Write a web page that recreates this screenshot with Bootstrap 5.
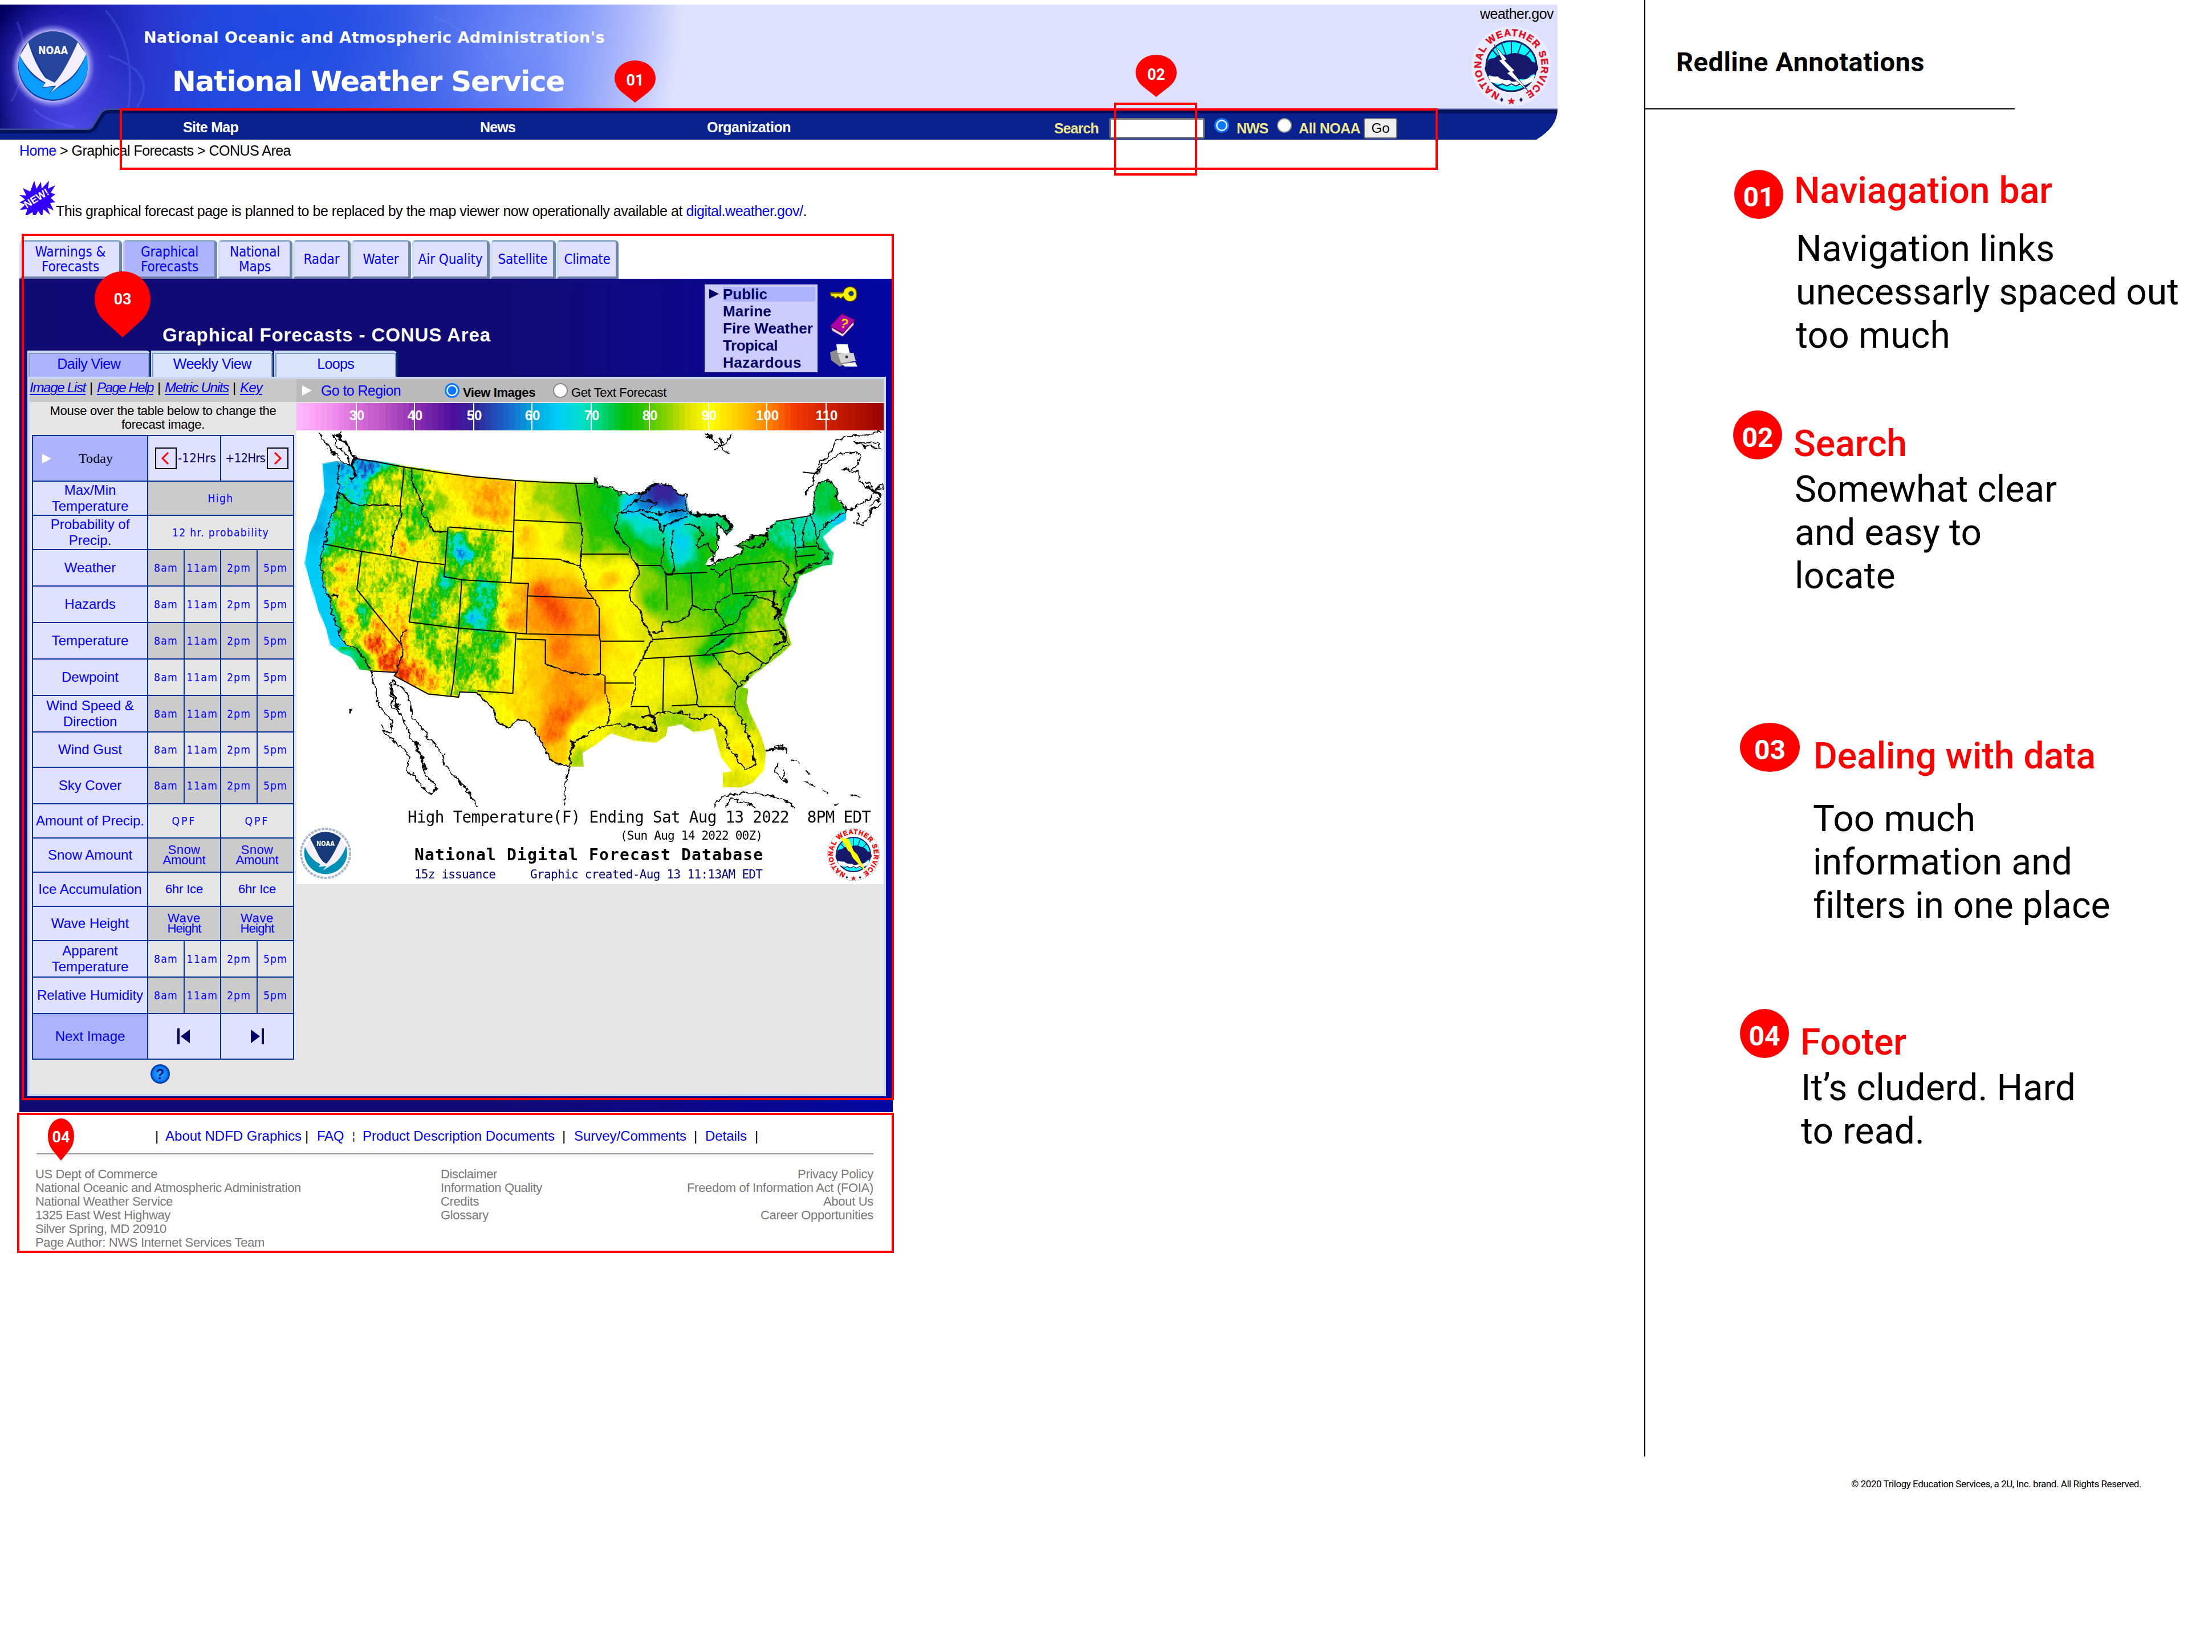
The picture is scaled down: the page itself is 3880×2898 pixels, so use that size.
<!DOCTYPE html>
<html lang="en">
<head>
<meta charset="utf-8">
<title>National Weather Service - Redline Annotations</title>
<link href="https://cdn.jsdelivr.net/npm/bootstrap@5.3.0/dist/css/bootstrap.min.css" rel="stylesheet">
<style>
body{width:3880px;height:2898px;background:#fff;color:#000;font-family:"Liberation Sans",Arial,sans-serif;overflow:hidden}
a{color:#00f;text-decoration:none}
.fit{display:inline-block;white-space:nowrap}
.site{width:2884px;height:2898px}
/* banner */
.banner{margin-top:8px;width:2732px;height:237px;background:
 radial-gradient(circle 125px at 93px 108px,rgba(120,120,255,.75),rgba(60,50,220,.35) 70%,transparent),
 radial-gradient(ellipse 240px 190px at 960px 60px,rgba(150,170,255,.4),transparent),
 radial-gradient(ellipse 140px 200px at 120px 237px,rgba(90,90,245,.9),transparent),
 radial-gradient(ellipse 220px 180px at 520px 60px,rgba(20,70,225,.5),transparent),
 linear-gradient(97deg,#00005c 0,#1414a0 120px,#2a35cc 260px,#2448de 380px,#3056e4 620px,#4a6cee 820px,#6482f6 960px,#a3b1fb 1070px,#dee1fd 1190px)}
.nav-shape{left:0;top:0}
.brand-row{height:183px}
.seal-noaa{width:148px;height:148px;margin:34px 85px 0 19px}
.agency{font:bold 27px/40px "DejaVu Sans",sans-serif;margin-top:38px;color:#fff}
.service{font:bold 50px/60px "DejaVu Sans",sans-serif;margin:27px 0 0 50px;color:#fff}
.gov{font-size:25px;line-height:30px;margin:1px 7px 0 0}
.seal-nws{width:140px;height:140px;margin:7px 11px 0 0}
.mainnav{height:54px;padding:14px 0 0 321px;grid-template-columns:521px 398px 609px 97px 184px 39px 71px 38px 114px 59px;font-size:25px;font-weight:bold;line-height:30px}
.mainnav>a{color:#fff;margin-top:-5px}
.mainnav>label{color:#f0e68c}
.searchbox{width:167px;height:36px;border:3px solid #777;border-radius:3px;background:#fff;margin-top:0}
.rb{width:26px;height:26px;border:2px solid #888;border-radius:50%;background:#fff;display:block}
.rb.on{border:3px solid #0a78ff;background:radial-gradient(circle,#0a78ff 0 7px,#fff 8px)}
.mainnav .rb{margin-top:-10px}
.gobtn{width:59px;height:36px;border:2px solid #777;border-radius:4px;background:#efefef;font-size:24px;line-height:32px;padding:0;font-weight:normal;color:#000}
.crumbs{padding:4px 0 0 34px;font-size:25px;line-height:30px}
.notice{margin:36px 0 0 34px;height:70px;font-size:25px;line-height:30px}
/* tabs */
.toptabs{margin:36px 0 0 34px;height:68px}
.toptabs a{height:68px;background:#e0e0ff;border:3px solid #8fb0cf;border-right:5px solid #6d88a8;border-bottom:4px solid #6c80a8;border-left:4px solid #cfe0f2;border-radius:7px 7px 0 0;font:24px/26px "DejaVu Sans Condensed","DejaVu Sans",sans-serif;text-align:center}
.toptabs a.on{background:#adb4fd;border-left-color:#bcc6f8}
.panel{margin-left:34px;width:1532px;height:1462px;background:linear-gradient(90deg,#110a73 0,#110a75 55%,#0e0888 75%,#0208a2 100%)}
.panel-head{height:172px}
.panel-title{font-weight:bold;font-size:33px;line-height:40px;color:#fff;margin:79px 0 0 251px}
.subtabs{margin:7px 0 0 14px;height:46px}
.subtabs a{width:216.5px;height:46px;background:#dbe4fd;border:4px solid #c8dcf6;border-left-width:2px;border-right:3px solid #002a80;border-bottom:0;box-shadow:inset 2px 2px #8498b8,inset -2px 0 #8498b8;border-radius:0 9px 0 0;font-size:25px;line-height:38px;text-align:center}
.subtabs a.on{background:#adb4fd}
.usermenu{margin:10px 0 0 auto;width:198px;height:154px;background:#ccf;padding:2px 4px 0 32px;font-weight:bold;font-size:26px;line-height:30px;color:#006;position:relative}
.usermenu div:first-of-type{background:linear-gradient(#adb4fd,#adb4fd) 0 2px/100% 26px no-repeat}
.usermenu svg{position:absolute;left:8px;top:8px}
.toolicons{width:132px;padding:13px 0 0 21px}
.viewer{margin-left:14px;width:1506px;height:1262px;border:4px solid #c8d8f4;background:#e5e5e5}
.leftcol{width:468px}
.linkbar{height:40px;background:#c8c8c8;font-size:24px;padding-bottom:10px;font-style:italic}
.linkbar a{text-decoration:underline;text-decoration-thickness:2px;text-underline-offset:3px;line-height:30px}
.linkbar b{font-weight:normal;font-style:normal;width:20px;text-align:center}
.hint{font-size:22px;line-height:24px;padding-top:4px}
.grid-t{margin:6px 0 0 4px;width:460px;table-layout:fixed;border-collapse:collapse;color:#00f}
.grid-t td{border:2px solid #039;padding:0;text-align:center;vertical-align:middle;font:19px/18px "DejaVu Sans Condensed","DejaVu Sans",sans-serif;background:#e5e5e5}
.grid-t td.l{background:#e0e0ff;font:24px/28px "Liberation Sans",sans-serif}
.grid-t tr.g td:not(.l){background:#cbcbcb}
.grid-t td.s{font:22px/18px "Liberation Sans",sans-serif}
.grid-t tr.hd td{background:#e0e0ff}
.grid-t tr.hd td.l{background:#adb4fd}
.today{font:24px "Liberation Serif",serif;color:#001;margin-left:47px}
.step{color:#006;font-size:22px}
.stepbtn{width:38px;height:38px;border:2px solid #000;display:inline-block}
.rightcol{width:1030px}
.viewbar{height:40px;background:#bababa;font-size:22px;grid-template-columns:33px 217px 32px 158px 32px auto;padding-left:10px;line-height:30px}
.mapbox{height:796px;background:#fff;position:relative}
.mapbox canvas,.mapbox svg{position:absolute;left:0;top:0}
.mapbox canvas{image-rendering:pixelated;width:1030px;height:796px}
/* footer */
.flinks{margin:27px 0 0 272px;font-size:24px;line-height:30px;grid-template-columns:18px 245px 21px 62px 18px 350px 21px 210px 20px 87px 10px}
.rule{margin:15px 0 0 64px;width:1468px;height:4px;border-top:2px solid #999;border-bottom:2px solid #eee}
.fine{margin:21px 0 0 62px;width:1470px;font-size:22px;line-height:24px;color:#787878}
.fine>div:first-child{width:711px}
/* red annotations over the page */
.redbox{position:absolute;border:4px solid red}
.pin{position:absolute}
/* aside */
.side{width:996px;font-family:Roboto,sans-serif}
.notes{height:2555px;border-left:2px solid #000}
.side-title{font-size:47px;font-weight:bold;line-height:60px;padding:79px 0 0 54px;height:190px}
.side-line{width:648px;height:2px;background:#000}
.note{font-size:64px;line-height:76px}
.note h2{font-size:64px;line-height:76px;font-weight:500;color:red;margin:0}
.dot{width:86px;height:86px;border-radius:50%;background:red;color:#fff;font-weight:bold;font-size:48px;line-height:60px;padding-top:9px;flex:none}
.copy{font-size:17px;line-height:24px;margin:36px 0 0 363px}
</style>
<script src="https://cdn.jsdelivr.net/npm/bootstrap@5.3.0/dist/js/bootstrap.bundle.min.js"></script>
</head>
<body class="d-flex">
<svg width="0" height="0" class="position-absolute">
 <symbol id="nws" viewBox="-70 -70 140 140">
  <circle r="47" fill="#fff"/>
  <circle r="44" fill="#0ff" stroke="#16206c" stroke-width="3"/>
  <path d="M0,-44V-10M-17,-40L-5,-8M18,-40L6,-8M-33,-28L-12,-5M34,-28L12,-5" stroke="#16206c" stroke-width="2"/>
  <path d="M-41,18Q-20,10 0,24Q20,30 42,14L38,26Q20,38 0,34Q-20,32 -36,28Z" fill="#fff"/>
  <path d="M-44,12Q-50,2 -42,-2Q-44,-14 -30,-14Q-22,-22 -8,-20Q6,-26 20,-20Q32,-18 36,-8Q48,-6 47,6Q42,14 34,16Q28,26 16,22Q4,32 -4,24Q-16,26 -24,18Q-36,20 -44,12Z" fill="#16186c"/>
  <path d="M-32,31l8,4 8,-4 8,4 8,-4 8,4 8,-4 8,4 8,-4" stroke="#16206c" stroke-width="2" fill="none"/>
  <path d="M0,55l2,4.500h5l-4,3 1.500,5 -4.500,-3 -4.500,3 1.500,-5 -4,-3h5z" fill="#e01020"/>
  <path d="M-17,55l3,4 -3,4 -3,-4zM17,55l3,4 -3,4 -3,-4z" fill="#16206c"/>
 </symbol>
 <symbol id="noaa" viewBox="-50 -50 100 100">
  <path d="M-33,-32A46,46 0 0 1 33,-32L14,10Q6,26 0,22Q-5,20 -14,6Z" fill="var(--n)"/>
  <path d="M-44,-14L-33,-32Q-24,-2 -10,16L2,22Q14,10 33,-32L44,-16Q32,12 14,22L-4,36L4,26L-14,28L-10,22Q-32,10 -44,-14Z" fill="#f3efff"/>
  <path d="M-44,-14Q-34,12 -11,23L-14,29L2,27L-6,37L16,23Q34,12 44,-16A46,46 0 1 1 -44,-14Z" fill="var(--b)"/>
 </symbol>
</svg>

<main class="site position-relative">
 <header class="banner position-relative">
  <svg class="nav-shape position-absolute" width="2732" height="237">
   <g fill="none" stroke="#6d8dff" stroke-opacity=".22" stroke-width="4"><path d="M30,30Q60,100 20,170M185,10Q240,70 225,180M240,180Q280,120 190,90M60,184Q80,205 130,215M840,40Q900,90 830,170M760,20Q860,60 900,180M930,10Q990,90 940,180"/></g>
   <path d="M0,219H152Q161,219 166,208L176,192Q180,184 190,184H2732Q2732,215 2695,237H0Z" fill="#0a228e"/>
   <path d="M0,219H152Q161,219 166,208L176,192Q180,184 190,184H2732" fill="none" stroke="#3c4f95" stroke-width="3"/>
   <path d="M0,223H155Q165,223 170,210L180,194Q183,188 192,188H2732" fill="none" stroke="#031159" stroke-width="6"/>
   <path d="M2732,184V237H2695Q2732,215 2732,184Z" fill="#fff"/>
  </svg>
  <div class="brand-row d-flex position-relative">
   <svg class="seal-noaa" viewBox="-74 -74 148 148"><defs><radialGradient id="gl"><stop offset=".78" stop-color="#e8e4ff"/><stop offset="1" stop-color="#9a90ff" stop-opacity="0"/></radialGradient></defs><circle r="74" fill="url(#gl)"/><circle r="61" fill="#123c9c"/><use href="#noaa" x="-66" y="-66" width="132" height="132" style="--n:#26459c;--b:#0a9dff"/><text x="0" y="-21" text-anchor="middle" font-family="DejaVu Sans" font-weight="bold" font-size="19" fill="#fff" textLength="52" lengthAdjust="spacingAndGlyphs">NOAA</text></svg>
   <div class="flex-grow-1"><div class="agency"><span class="fit" data-w="809">National Oceanic and Atmospheric Administration's</span></div>
   <div class="service"><span class="fit" data-w="688">National Weather Service</span></div></div>
   <div class="d-flex flex-column align-items-end"><div class="gov"><span class="fit" data-w="129">weather.gov</span></div>
    <svg class="seal-nws" viewBox="-70 -70 140 140"><circle r="70" fill="#f0f1ff" opacity=".6"/><use href="#nws" x="-70" y="-70" width="140" height="140"/><path d="M-30,-38L-8,-12L-12,-10L6,8L2,10L30,44L-8,12L-3,10L-22,-10L-17,-12Z" fill="#fff" stroke="#16206c" stroke-width="1"/><path id="ringA" d="M-20,49A53,53 0 1 1 20,49" fill="none"/><text font-family="Liberation Sans" font-weight="bold" font-size="17" fill="#e01020" stroke="#e01020" stroke-width=".6"><textPath href="#ringA" textLength="286">NATIONAL WEATHER SERVICE</textPath></text></svg></div>
  </div>
  <nav class="mainnav d-grid position-relative align-items-center">
   <a href="#"><span class="fit" data-w="97">Site Map</span></a><a href="#"><span class="fit" data-w="62">News</span></a><a href="#"><span class="fit" data-w="147">Organization</span></a>
   <label><span class="fit" data-w="78">Search</span></label><input class="searchbox" type="text">
   <span class="rb on"></span><label><span class="fit" data-w="55">NWS</span></label>
   <span class="rb"></span><label><span class="fit" data-w="108">All NOAA</span></label><button class="gobtn">Go</button>
  </nav>
 </header>

 <div class="crumbs"><span class="fit" data-w="476"><a href="#">Home</a> &gt; Graphical Forecasts &gt; CONUS Area</span></div>
 <div class="notice d-flex align-items-end">
  <svg class="align-self-start" width="64" height="62" viewBox="0 0 64 62"><path d="M26,2l4,14 8,-12 1,12 13,-14 -2,14 13,-6 -8,13 8,3 -8,6 8,8 -9,1 6,13 -11,-5 5,13 -12,-10 -2,14 -7,-11 -8,14 -2,-12 -13,8 4,-13 -13,1 9,-9 -10,-4 10,-5 -10,-8 12,1 -6,-13 13,6z" fill="#3200ff"/><text transform="translate(33,38) rotate(-32)" text-anchor="middle" font-family="Liberation Sans" font-weight="bold" font-size="18" fill="#fff">NEW!</text></svg>
  <span class="fit" data-w="1317">This graphical forecast page is planned to be replaced by the map viewer now operationally available at <a href="#">digital.weather.gov/</a>.</span>
 </div>

 <div class="toptabs d-flex" id="toptabs"></div>
 <section class="panel">
  <div class="panel-head d-flex">
   <div><div class="panel-title"><span class="fit" data-w="576">Graphical Forecasts - CONUS Area</span></div>
    <div class="subtabs d-flex"><a class="on" href="#"><span class="fit" data-w="111">Daily View</span></a><a href="#"><span class="fit" data-w="137">Weekly View</span></a><a href="#"><span class="fit" data-w="65">Loops</span></a></div></div>
   <div class="usermenu"><svg width="18" height="18"><path d="M0,0L17,8.5L0,17Z" fill="#006"/></svg>
    <div><span class="fit" data-w="78">Public</span></div><div><span class="fit" data-w="85">Marine</span></div><div><span class="fit" data-w="158">Fire Weather</span></div><div><span class="fit" data-w="96">Tropical</span></div><div><span class="fit" data-w="138">Hazardous</span></div></div>
   <div class="toolicons d-flex flex-column">
    <svg width="50" height="30" viewBox="0 0 50 30"><path d="M1,11H24Q26,1 37,1Q48,2 48,14Q48,26 36,27Q27,26 24,18L20,22 15,18 10,22 7,18 3,18Z" fill="#f8f000" stroke="#554400" stroke-width="1.5"/><circle cx="38" cy="13" r="4.500" fill="#113a8c" stroke="#a08a00"/><path d="M3,13H24" stroke="#998800" stroke-width="2"/></svg>
    <svg style="margin-top:17px" width="46" height="44" viewBox="0 0 46 44"><path d="M2,24L4,31L23,42L43,22L44,12" fill="#7a0070"/><path d="M4,26L23,37L42,16V21L23,41L5,31Z" fill="#ddd"/><path d="M22,1L44,12L24,35L1,23Z" fill="#b000a8" stroke="#4a0048"/><text transform="translate(24,26) rotate(15)" text-anchor="middle" font-family="Liberation Sans" font-weight="bold" font-size="23" fill="#ffe000">?</text></svg>
    <svg style="margin-top:11px" width="50" height="42" viewBox="0 0 50 42"><path d="M1,14L14,9L42,16L45,28L18,39L3,28Z" fill="#8c8c8c"/><path d="M12,0H32L36,18L14,15Z" fill="#fff"/><path d="M15,17L42,15L46,29L20,33Z" fill="#d4d4d4"/><circle cx="30" cy="22" r="2.500" fill="#333"/><path d="M22,35L45,31L49,39L27,39Z" fill="#fff"/></svg>
   </div>
  </div>

  <div class="viewer d-flex">
   <div class="leftcol">
    <div class="linkbar d-flex align-items-center"><a href="#" class="fit" data-w="98">Image List</a><b>|</b><a href="#" class="fit" data-w="99">Page Help</a><b>|</b><a href="#" class="fit" data-w="112">Metric Units</a><b>|</b><a href="#" class="fit" data-w="39">Key</a></div>
    <div class="hint text-center"><span class="fit" data-w="397">Mouse over the table below to change the</span><br><span class="fit" data-w="146">forecast image.</span></div>
    <table class="grid-t"><colgroup><col style="width:202px"><col style="width:64px"><col style="width:64px"><col style="width:64px"><col style="width:64px"></colgroup><tbody id="rows"></tbody></table>
    <svg style="margin:8px 0 0 212px;display:block" width="34" height="34"><defs><radialGradient id="hb"><stop offset="0" stop-color="#30a8ff"/><stop offset=".75" stop-color="#0a80f8"/><stop offset="1" stop-color="#0040c0"/></radialGradient></defs><circle cx="17" cy="17" r="16" fill="url(#hb)" stroke="#0838a8" stroke-width="2"/><text x="17" y="26" text-anchor="middle" font-family="Liberation Sans" font-weight="bold" font-size="25" fill="#00187c">?</text></svg>
   </div>
   <div class="rightcol">
    <div class="viewbar d-grid align-items-center">
     <svg width="18" height="18"><path d="M0,0L17,9L0,18Z" fill="#fff"/></svg><a href="#" style="font-size:25px"><span class="fit" data-w="140">Go to Region</span></a>
     <span class="rb on"></span><b style="padding-top:8px"><span class="fit" data-w="127">View Images</span></b><span class="rb"></span><span style="padding-top:8px"><span class="fit" data-w="167">Get Text Forecast</span></span>
    </div>
    <svg class="d-block" id="scale" style="margin-top:2px" width="1030" height="48"></svg>
    <div class="mapbox">
     <canvas id="heat" width="515" height="398"></canvas>
     <svg width="1030" height="796" viewBox="520 755 1030 796" style="overflow:hidden">
      <defs><filter id="rough" x="-5%" y="-5%" width="110%" height="110%"><feTurbulence type="fractalNoise" baseFrequency=".09" numOctaves="3" seed="4"/><feDisplacementMap in="SourceGraphic" scale="13" xChannelSelector="R" yChannelSelector="G"/></filter>
      <filter id="rough2" x="-5%" y="-5%" width="110%" height="110%"><feTurbulence type="fractalNoise" baseFrequency=".12" numOctaves="2" seed="9"/><feDisplacementMap in="SourceGraphic" scale="7" xChannelSelector="R" yChannelSelector="G"/></filter></defs>
      <g fill="none" stroke="#000" stroke-linejoin="round">
       <g stroke-width="2"><path vector-effect="non-scaling-stroke" transform="translate(500,740) scale(.68878,.45918)" d="M178,140L230,152 305,173 400,195 480,210 585,224 650,230 740,235 785,235M303,173L300,230 293,320M100,467L195,495 270,513 335,533 405,545M195,495L183,640 298,855M338,535L316,765M316,765L440,788 590,807 615,810 800,815M418,402L580,420M415,402L405,592 450,603 578,615M582,420L575,615M450,603L442,788 428,1000 422,1050M587,225L583,375 580,520M583,375L754,387M740,235L752,360M580,520L700,525M752,505L876,505M578,615L620,618 617,665 785,675M617,665L615,808M800,710V815L803,838V965M770,645L875,645M895,549L958,549M970,585L973,720M1034,577L1038,702M968,582L1075,575M1133,555L1140,657 1250,645M1150,547L1265,532M935,832L1080,817 1260,795M910,905L1085,890M965,903L962,1110M1030,898L1050,1050 1048,1080M803,838L915,838M817,998L888,998M590,830L663,833V925M588,807L580,1037 490,1028M985,1085L1050,1080 1053,1088 1143,1088M880,1087H925L930,1115M815,970V1040M218,952L285,957 278,970 365,1040 442,1052 445,1032 490,1035M1085,887L1140,875 1155,888 1180,880 1218,922M1250,380L1340,358M1302,480L1355,475M1302,515L1350,508M1318,192L1350,197"/></g>
       <g stroke-width="2" filter="url(#rough2)"><path vector-effect="non-scaling-stroke" transform="translate(500,740) scale(.68878,.45918)" d="M137,265L150,285 170,312 200,320 240,315 293,322 298,350 285,400 275,440 270,515M323,180L322,225 335,270 350,310 347,355 362,365 378,420 412,420M298,855L300,890 290,920 285,957M312,800L298,805 295,850M754,387L758,450 752,505 752,548 762,590 770,645 785,675 800,710M700,525L725,540 750,548M850,345L840,400 850,440 876,480 880,510 895,545 903,580 878,640 880,680 905,720 910,760 928,800 935,830 920,870 905,920 890,960 893,1020 880,1085M935,805L960,800 962,765 1000,765 1025,740 1038,702 1070,720 1095,718 1105,740 1125,780 1150,765 1160,725 1185,690 1195,665 1170,660M1095,718L1100,690 1135,660M1080,815L1125,780M1065,890L1120,830 1135,812M1088,890L1155,1010M663,925L720,955 760,965 803,965 815,970M817,1040L828,1100 822,1150M490,1035L530,1100 540,1145 570,1172 590,1137 620,1145 640,1190 665,1260 680,1300 725,1317M1265,532L1285,560 1268,600 1285,630M1195,665L1230,680 1255,700M1290,375L1300,440 1302,550M1330,365L1318,420 1320,480M1340,360L1355,440M905,350L950,378 960,430 965,400 1000,375 1025,362M990,410Q980,480 992,560L985,585 970,585 958,550 965,440M1020,390L1050,400 1065,430 1045,470 1055,480 1075,465 1090,500 1090,545 1075,550"/></g>
       <g stroke-width="2.200" filter="url(#rough)"><path vector-effect="non-scaling-stroke" transform="translate(500,740) scale(.68878,.45918)" d="M135,150L133,200 137,265 130,320 118,370 105,420 100,470 88,530 95,600 105,650 115,670 118,730 135,780 140,820 150,845 180,870 200,900 215,945M785,235L788,213 797,245 830,252 860,275 915,275 855,348 900,340 955,350 1000,340 1025,345M905,300L945,308 930,330M915,275L925,245 940,235 985,245 1000,275 1020,280 1025,320 1030,350 1060,360 1120,360 1142,410 1125,430 1100,380 1105,440 1098,500 1085,530M1090,545L1120,525 1160,505 1165,487 1148,475 1180,450 1225,425 1250,380M1085,560L1110,585 1150,547M1150,475L1200,480 1230,455 1225,425M1340,358L1345,320 1352,250 1365,228 1392,228 1405,260 1408,300 1425,325 1432,340 1400,370 1370,400 1355,440 1358,480 1385,500 1375,530 1340,545 1300,575 1298,610 1290,650 1270,680 1255,760 1275,800 1280,850 1250,880 1225,920 1180,970 1150,1020 1145,1090 1165,1150 1190,1230 1195,1310 1175,1330 1150,1280 1125,1240 1120,1170 1085,1115 1050,1135 1010,1110 960,1115 930,1120 945,1175 900,1170 850,1155 820,1155 760,1200 730,1230 725,1317 715,1380 712,1468M1340,545L1305,575 1345,555M218,952L240,1085 275,1145 270,1180 250,1185 285,1230 315,1270 315,1335 370,1425 388,1400 355,1340 350,1280 320,1200 295,1120 272,1085 270,990 315,1040 325,1130 375,1220 400,1270 405,1310 450,1380 490,1468M80,40L120,110 150,160 165,165 160,130 130,90 125,50 145,40M1068,40L1110,95 1130,118M1110,95L1140,50M1090,110L1115,90 1105,60M1350,197L1370,160 1430,115 1465,125 1460,170 1435,180 1415,185 1460,190M1325,280L1350,210 1360,160 1390,120 1400,75 1430,55 1515,40M1450,78L1510,80 1518,98 1480,95 1450,78M1460,190L1465,230 1500,270 1523,250M1480,230L1520,290 1490,320M1432,340L1475,310 1520,240M1460,350L1455,385 1475,398 1495,330 1520,310M1230,1250L1270,1240 1280,1270M1255,1310L1250,1340 1275,1375 1265,1320M1290,1290L1310,1310M1325,1330L1335,1350M1320,1370L1350,1395M1370,1400L1380,1420M1090,1468L1110,1435 1160,1418 1230,1425 1300,1468M1120,1468L1140,1440 1200,1468M1400,1468L1410,1455M1440,1420L1465,1435M165,1095V1110M245,1155L250,1175"/></g>
       <g stroke-width="4" filter="url(#rough)"><path vector-effect="non-scaling-stroke" transform="translate(500,740) scale(.68878,.45918)" d="M130,50L160,90 178,140 170,165 180,200 165,225M135,45L150,75 168,110M1030,350L1120,362 1140,410 1122,415M915,275L930,245 945,238M870,1160L945,1175 935,1125 910,1125M1250,650L1240,700 1260,720 1245,760M1260,800L1275,830 1245,860M725,1220L735,1250 722,1290M1180,440L1225,432M1480,250L1520,280M1225,1252L1245,1255M120,660L135,665M270,1010L290,1100M330,1220L360,1330"/></g>
      </g>
      <g font-family="DejaVu Sans Mono">
       <text x="715" y="1443" font-size="27.500" textLength="813">High Temperature(F) Ending Sat Aug 13 2022&#160;&#160;8PM EDT</text>
       <text x="1088" y="1473" font-size="21" textLength="250">(Sun Aug 14 2022 00Z)</text>
       <text x="727" y="1509" font-size="28" font-weight="bold" textLength="611">National Digital Forecast Database</text>
       <g font-size="21" fill="#000080"><text x="727" y="1541" textLength="143">15z issuance</text><text x="930" y="1541" textLength="408">Graphic created-Aug 13 11:13AM EDT</text></g>
      </g>
      <circle cx="571" cy="1497" r="43" fill="#fff" stroke="#a9b8cf" stroke-width="4" stroke-dasharray="5 1.500"/>
      <use href="#noaa" x="530" y="1456" width="82" height="82" style="--n:#163a78;--b:#008fb5"/>
      <text x="571" y="1484" text-anchor="middle" font-family="DejaVu Sans" font-weight="bold" font-size="13" fill="#fff" textLength="32" lengthAdjust="spacingAndGlyphs">NOAA</text>
      <g transform="translate(1497,1499) scale(.68)"><circle r="67" fill="#fff" stroke="#bbb" stroke-width="2" stroke-dasharray="4 3"/><use href="#nws" x="-70" y="-70" width="140" height="140"/><path d="M-34,-44L-12,-40L0,-10L10,0L32,44L-2,8L-8,-6L-14,-10Z" fill="#ff0"/><text font-family="Liberation Sans" font-weight="bold" font-size="17" fill="red" stroke="red" stroke-width=".8"><textPath href="#ringA" textLength="286">NATIONAL WEATHER SERVICE</textPath></text></g>
     </svg>
    </div>
   </div>
  </div>
 </section>

 <footer>
  <div class="flinks d-grid"><span>|</span><a href="#"><span class="fit" data-w="239">About NDFD Graphics</span></a><span>|</span><a href="#"><span class="fit" data-w="47">FAQ</span></a><span style="font-size:19px">¦</span><a href="#"><span class="fit" data-w="337">Product Description Documents</span></a><span>|</span><a href="#"><span class="fit" data-w="197">Survey/Comments</span></a><span>|</span><a href="#"><span class="fit" data-w="73">Details</span></a><span>|</span></div>
  <div class="rule"></div>
  <div class="fine d-flex">
   <div><span class="fit" data-w="214">US Dept of Commerce</span><br><span class="fit" data-w="466">National Oceanic and Atmospheric Administration</span><br><span class="fit" data-w="241">National Weather Service</span><br><span class="fit" data-w="237">1325 East West Highway</span><br><span class="fit" data-w="230">Silver Spring, MD 20910</span><br><span class="fit" data-w="402">Page Author: NWS Internet Services Team</span></div>
   <div><span class="fit" data-w="99">Disclaimer</span><br><span class="fit" data-w="178">Information Quality</span><br><span class="fit" data-w="67">Credits</span><br><span class="fit" data-w="84">Glossary</span></div>
   <div class="ms-auto text-end"><span class="fit" data-w="133">Privacy Policy</span><br><span class="fit" data-w="327">Freedom of Information Act (FOIA)</span><br><span class="fit" data-w="88">About Us</span><br><span class="fit" data-w="198">Career Opportunities</span></div>
  </div>
 </footer>

 <div class="redbox" style="left:210px;top:190px;width:2312px;height:108px"></div>
 <div class="redbox" style="left:1954px;top:180px;width:146px;height:128px"></div>
 <div class="redbox" style="left:38px;top:410px;width:1530px;height:1520px"></div>
 <div class="redbox" style="left:30px;top:1952px;width:1538px;height:246px"></div>
 <div id="pins"></div>
</main>

<aside class="side">
 <div class="notes">
  <div class="side-title"><span class="fit" data-w="436">Redline Annotations</span></div>
  <div class="side-line"></div>
  <div class="note d-flex" style="margin:105px 0 0 156px"><div class="dot d-flex align-items-center justify-content-center" style="margin-top:1px">01</div><div style="margin-left:19px"><h2><span class="fit" data-w="453">Naviagation bar</span></h2><div style="margin:26px 0 0 3px"><span class="fit" data-w="454">Navigation links</span><br><span class="fit" data-w="672">unecessarly spaced out</span><br><span class="fit" data-w="271">too much</span></div></div></div>
  <div class="note d-flex" style="margin:93px 0 0 154px"><div class="dot d-flex align-items-center justify-content-center">02</div><div style="margin:21px 0 0 20px"><h2><span class="fit" data-w="199">Search</span></h2><div style="margin:4px 0 0 2px"><span class="fit" data-w="460">Somewhat clear</span><br><span class="fit" data-w="328">and easy to</span><br><span class="fit" data-w="177">locate</span></div></div></div>
  <div class="note d-flex" style="margin:219px 0 0 166px"><div class="dot d-flex align-items-center justify-content-center" style="width:105px">03</div><div style="margin:21px 0 0 24px"><h2><span class="fit" data-w="495">Dealing with data</span></h2><div style="margin-top:34px;margin-left:-1px"><span class="fit" data-w="285">Too much</span><br><span class="fit" data-w="455">information and</span><br><span class="fit" data-w="519">filters in one place</span></div></div></div>
  <div class="note d-flex" style="margin:143px 0 0 166px"><div class="dot d-flex align-items-center justify-content-center">04</div><div style="margin:21px 0 0 20px"><h2><span class="fit" data-w="186">Footer</span></h2><div style="margin:4px 0 0 1px"><span class="fit" data-w="482">It’s cluderd. Hard</span><br><span class="fit" data-w="217">to read.</span></div></div></div>
 </div>
 <div class="copy"><span class="fit" data-w="509">© 2020 Trilogy Education Services, a 2U, Inc. brand. All Rights Reserved.</span></div>
</aside>

<script>
// section tabs: [lines with widths, tab width, gap after]
document.getElementById('toptabs').innerHTML=[
 [[['Warnings &amp;',124],['Forecasts',101]],180,1],[[['Graphical',101],['Forecasts',101]],166,1],[[['National',88],['Maps',56]],131,1],
 [[['Radar',63]],101,1],[[['Water',63]],105,1],[[['Air Quality',113]],137,1],[[['Satellite',87]],115,1],[[['Climate',81]],109,0]
].map((t,i)=>`<a href="#" class="d-flex flex-column justify-content-center align-items-center${i==1?' on':''}" style="width:${t[1]}px;margin-right:${t[2]}px">${t[0].map(l=>`<span class="fit" data-w="${l[1]}">${l[0]}</span>`).join('')}</a>`).join('');

// forecast table
const f=(t,w)=>`<span class="fit" data-w="${w}">${t}</span>`;
const hrs=`<td>${f('8am',42)}</td><td>${f('11am',55)}</td><td>${f('2pm',42)}</td><td>${f('5pm',42)}</td>`;
const two=(h)=>`<td class="s" colspan="2">${h}</td><td class="s" colspan="2">${h}</td>`;
const R=[
 ['Max/Min<br>Temperature',60,1,`<td colspan="4">${f('High',45)}</td>`],
 ['Probability of<br>Precip.',60,0,`<td colspan="4">${f('12 hr. probability',170)}</td>`],
 ['Weather',64,1,hrs],['Hazards',64,0,hrs],['Temperature',64,1,hrs],['Dewpoint',64,0,hrs],['Wind Speed &amp;<br>Direction',64,1,hrs],['Wind Gust',62,0,hrs],['Sky Cover',64,1,hrs],
 [f('Amount of Precip.',190),60,0,`<td colspan="2">${f('QPF',43)}</td><td colspan="2">${f('QPF',43)}</td>`],
 ['Snow Amount',60,1,two(f('Snow',57)+'<br>'+f('Amount',75))],['Ice Accumulation',60,0,two(f('6hr Ice',66))],['Wave Height',60,1,two(f('Wave',58)+'<br>'+f('Height',59))],
 ['Apparent<br>Temperature',64,0,hrs],[f('Relative Humidity',186),64,1,hrs]];
const chev=(d)=>`<span class="stepbtn"><svg width="34" height="34" class="d-block"><path d="${d}" fill="none" stroke="red" stroke-width="3"/></svg></span>`;
document.getElementById('rows').innerHTML=
 `<tr class="hd" style="height:80px"><td class="l"><div class="d-flex align-items-center" style="padding-left:16px"><svg width="17" height="17"><path d="M0,0L16,8.500L0,17Z" fill="#fff"/></svg><span class="fit today" data-w="60">Today</span></div></td>
 <td colspan="2"><div class="step d-flex align-items-center" style="padding-left:12px">${chev('M21,7L11,17L21,27')}<span class="fit" data-w="67" style="margin-left:2px">-12Hrs</span></div></td>
 <td colspan="2"><div class="step d-flex align-items-center" style="padding-left:7px"><span class="fit" data-w="70" style="margin-right:3px">+12Hrs</span>${chev('M12,7L22,17L12,27')}</div></td></tr>`+
 R.map(r=>`<tr class="${r[2]?'g':''}" style="height:${r[1]}px"><td class="l">${r[0]}</td>${r[3]}</tr>`).join('')+
 `<tr class="hd" style="height:80px"><td class="l">Next Image</td><td colspan="2"><svg width="24" height="28"><path d="M0,0H4V28H0ZM22,2V26L6,14Z" fill="#006"/></svg></td><td colspan="2"><svg width="24" height="28"><path d="M20,0H24V28H20ZM1,2V26L17,14Z" fill="#006"/></svg></td></tr>`;

// temperature palette
const P=[[20,255,182,255],[25,245,146,240],[30,212,107,216],[34,191,87,197],[40,138,45,176],[46,76,15,158],[50,48,40,154],[55,26,98,200],[60,0,172,226],[64,0,204,248],[68,0,224,200],[71,0,214,130],[75,0,192,16],[78,40,196,0],[80,90,204,0],[83,150,212,0],[86,222,226,0],[90,255,255,0],[95,255,200,0],[100,255,128,0],[104,242,60,0],[110,204,32,0],[120,150,0,0]];
function col(t){t=Math.max(20,Math.min(119.900,t));let i=0;while(P[i+1][0]<=t)i++;const a=P[i],b=P[i+1],k=(t-a[0])/(b[0]-a[0]);return[1,2,3].map(j=>Math.round(a[j]+(b[j]-a[j])*k))}
let s='';
for(let t=19;t<121;t++){const x=105+(t-30)*10.3;s+=`<rect x="${x-.5}" width="11.500" height="48" fill="rgb(${col(t)})"/>`}
[105,207,311,413,517,619,723,825,929].forEach((x,i)=>{s+=`<path d="M${x},0V48" stroke="#fff" stroke-width="2"/><text x="${x+1}" y="30" text-anchor="middle" font-family="Liberation Sans" font-weight="bold" font-size="24" fill="#fff">${30+i*10}</text>`});
document.getElementById('scale').innerHTML=s;

// temperature field: scattered stations x,y,degF, interpolated by inverse distance
const S=`150,190,61 210,165,57 250,240,87 280,300,87 150,260,68 185,300,64 165,320,74 135,350,75 160,380,72 220,350,84 200,430,82 260,420,89 330,240,79 340,350,78 320,430,80 300,470,95 350,480,90 270,480,89 420,240,93 470,240,95 530,280,99 500,330,96 540,350,97 560,270,96 390,300,82 400,360,88 440,390,91 440,450,67 450,500,62 480,430,89 505,450,76 550,450,92 470,560,80 520,590,79 550,560,88 430,560,80 610,270,88 650,280,83 710,300,81 650,350,86 620,430,94 680,420,89 730,450,83 770,300,78 800,400,77 790,480,78 840,330,75 830,270,75 960,260,48 940,290,50 920,310,56 980,290,50 870,330,62 1000,330,57 940,350,66 900,400,68 930,440,70 870,420,75 900,480,78 940,520,77 1010,460,64 1010,510,66 1040,390,70 1090,380,71 1060,440,74 1080,490,77 1030,560,74 780,560,90 830,600,96 870,560,90 800,520,86 620,560,93 700,570,93 650,650,103 600,640,97 700,620,96 680,700,103 700,740,103 640,760,99 760,720,98 780,790,97 740,670,98 830,700,91 880,740,89 850,640,90 920,600,82 940,680,78 910,780,87 1000,620,79 1000,700,80 1080,600,77 1080,680,78 1030,760,82 960,820,86 1200,590,80 1160,620,77 1250,570,80 1200,480,76 1160,500,76 1260,420,71 1230,520,78 1300,430,69 1335,390,69 1370,320,73 1400,320,76 1370,270,73 1340,500,76 1415,370,63 1390,440,69 1385,520,72 1280,610,82 1200,730,83 1240,700,84 1150,720,74 1110,840,74 1080,880,76 1180,680,75 1130,790,77 1200,820,85 1130,890,86 1170,930,86 1000,860,86 1040,820,84 1100,970,87 1080,1050,86 1000,980,89 930,1000,89 850,1060,93 870,1130,85 850,880,92 840,960,91 700,860,101 740,940,99 640,850,95 780,860,96 640,970,95 700,1000,99 740,1080,100 710,1120,102 680,1180,101 700,1260,95 600,1080,93 560,1140,89 800,1020,97 780,1120,92 550,1010,92 620,1130,94 750,1180,88 460,820,86 450,900,77 450,950,77 520,960,78 560,900,91 510,850,79 480,1000,88 340,830,79 400,830,86 380,890,78 340,950,100 290,960,104 370,1010,94 260,920,106 420,990,86 140,560,97 130,640,95 150,700,96 170,760,100 180,660,84 195,720,70 205,760,74 230,760,103 220,840,106 110,540,84 100,600,84 110,640,82 150,840,92 230,580,88 250,680,86 280,560,86 280,740,95 300,650,85 300,820,98 350,600,91 380,660,80 375,720,74 350,740,79 370,560,89 410,600,68 410,730,88 460,650,86 490,660,70 520,630,66 480,740,64 500,770,69 450,700,88 520,700,72 560,700,95 580,760,99 560,620,93 525,830,72 1150,1250,91 1180,1280,93 1120,1150,89 1030,1130,85 70,550,63 120,180,61 118,240,62 110,290,62 95,350,61 80,400,60 75,450,62 75,500,63 80,600,63 85,650,63 95,700,63 105,750,63 118,800,64 130,850,64 155,880,67 195,920,74 175,900,71 750,1290,83 850,1190,86 940,1200,86 1000,1150,83 1110,1200,86 1150,1370,86 1215,1250,86 1180,1130,83 1160,1060,82 1175,1010,82 1290,700,75 1300,640,74 1285,850,83 1250,900,82 1200,970,82`.split(/\s+/).map(q=>q.split(',').map(Number));
const h=(x,y)=>{let n=Math.sin(x*127.1+y*311.7)*43758.5453;return n-Math.floor(n)};
const vn=(x,y)=>{const i=Math.floor(x),j=Math.floor(y);let u=x-i,v=y-j;u=u*u*(3-2*u);v=v*v*(3-2*v);return(h(i,j)*(1-u)+h(i+1,j)*u)*(1-v)+(h(i,j+1)*(1-u)+h(i+1,j+1)*u)*v};
const cv=document.getElementById('heat'),cx=cv.getContext('2d'),W=515,H=398,im=cx.createImageData(W,H);
// the coast as x for a given y, west of it the field is open sea
const coast=[[150,133],[270,136],[370,118],[470,98],[530,88],[600,95],[670,113],[730,118],[780,133],[845,150],[870,180],[945,215]];
const cw=y=>{if(y>=945)return 0;if(y<=150)return 133;let i=0;while(coast[i+1][0]<y)i++;const a=coast[i],b=coast[i+1];return a[1]+(b[1]-a[1])*(y-a[0])/(b[0]-a[0])};
for(let py=0;py<H;py++)for(let px=0;px<W;px++){
 const X=(px*2+20)*1.45185,Y=(py*2+15)*2.17778;let a=0,b=0;
 for(const q of S){const dx=q[0]-X,dy=(q[1]-Y)/1.5,d=dx*dx+dy*dy+150,w=1/Math.pow(d,1.75);a+=w*q[2];b+=w}
 let t=a/b;
 const n=vn(px/2.2,py/4.5)*.42+vn(px/1.1+9,py/1.5)*.33+vn(px/8,py/10)*.25-.5,sea=X<cw(Y);
 let k=X<560?25:X<620?9:4;if(X>380&&X<590&&Y<390)k=9;if(Y>1040)k=5;if(X>1090&&X<1350&&Y<900)k=9;
 if(sea){k=1;t=Y<860?Math.min(t,64):Math.min(t,74)}
 t=Math.round(t+n*k);const c=col(t),o=(py*W+px)*4;im.data[o]=c[0];im.data[o+1]=c[1];im.data[o+2]=c[2];im.data[o+3]=255}
const off=document.createElement('canvas');off.width=W;off.height=H;off.getContext('2d').putImageData(im,0,0);
const land=new Path2D('M178,140L230,148 305,168 400,190 480,208 585,222 650,226 740,231 785,232 788,211 797,242 830,252 860,275 915,275 925,245 940,235 985,245 1000,275 1020,280 1025,320 1030,345 1060,355 1120,360 1142,410 1125,430 1100,390 1105,440 1098,500 1078,525 1070,545 1090,548 1120,525 1160,505 1165,487 1148,475 1180,450 1225,425 1250,380 1340,358 1345,320 1352,250 1365,228 1392,228 1405,260 1408,300 1425,325 1430,345 1428,375 1400,400 1370,440 1385,480 1397,500 1393,545 1370,550 1310,590 1300,650 1285,690 1270,760 1280,800 1290,850 1265,885 1235,920 1190,970 1165,1015 1180,1020 1175,1070 1190,1130 1210,1190 1225,1260 1220,1330 1190,1380 1160,1398 1115,1395 1115,1340 1138,1335 1110,1280 1100,1220 1090,1170 1070,1180 1040,1185 1010,1155 975,1165 970,1200 945,1225 890,1218 830,1190 790,1235 757,1265 760,1317 725,1317 680,1300 665,1260 640,1190 620,1145 590,1137 570,1172 540,1145 530,1100 490,1035 445,1032 442,1055 365,1040 278,970 285,957 218,952 190,945 170,900 140,880 115,850 105,790 85,720 65,620 50,540 62,430 80,370 100,270 95,160 132,150 165,165Z');
const lp=new Path2D();lp.addPath(land,new DOMMatrix([.34439,0,0,.22959,-10,-7.5]));
cx.clip(lp);cx.drawImage(off,0,0);

// map pins: left, top, width, height, text baseline
document.getElementById('pins').innerHTML=[['01',1078,106,72,74,44],['02',1992,96,72,74,44],['03',166,476,98,116,58],['04',84,1962,46,74,42]].map(p=>{const[n,x,y,w,hh,b]=p,r=w/2,ry=hh*.42;
 return`<svg class="pin" style="left:${x}px;top:${y}px" width="${w}" height="${hh}"><path d="M${r},0C${w*.78},0 ${w},${ry*.45} ${w},${ry}C${w},${hh*.58} ${w*.9},${hh*.7} ${w*.8},${hh*.77}L${r},${hh}L${w*.2},${hh*.77}C${w*.1},${hh*.7} 0,${hh*.58} 0,${ry}C0,${ry*.45} ${w*.22},0 ${r},0Z" fill="red"/><text x="${r}" y="${b}" text-anchor="middle" font-family="Roboto" font-weight="bold" font-size="27" fill="#fff">${n}</text></svg>`}).join('');

// track each label to its set width
document.querySelectorAll('.fit').forEach(e=>{const w=e.getBoundingClientRect().width,n=e.textContent.length;e.style.letterSpacing=((e.dataset.w-w)/n)+'px'});
</script>
</body>
</html>
